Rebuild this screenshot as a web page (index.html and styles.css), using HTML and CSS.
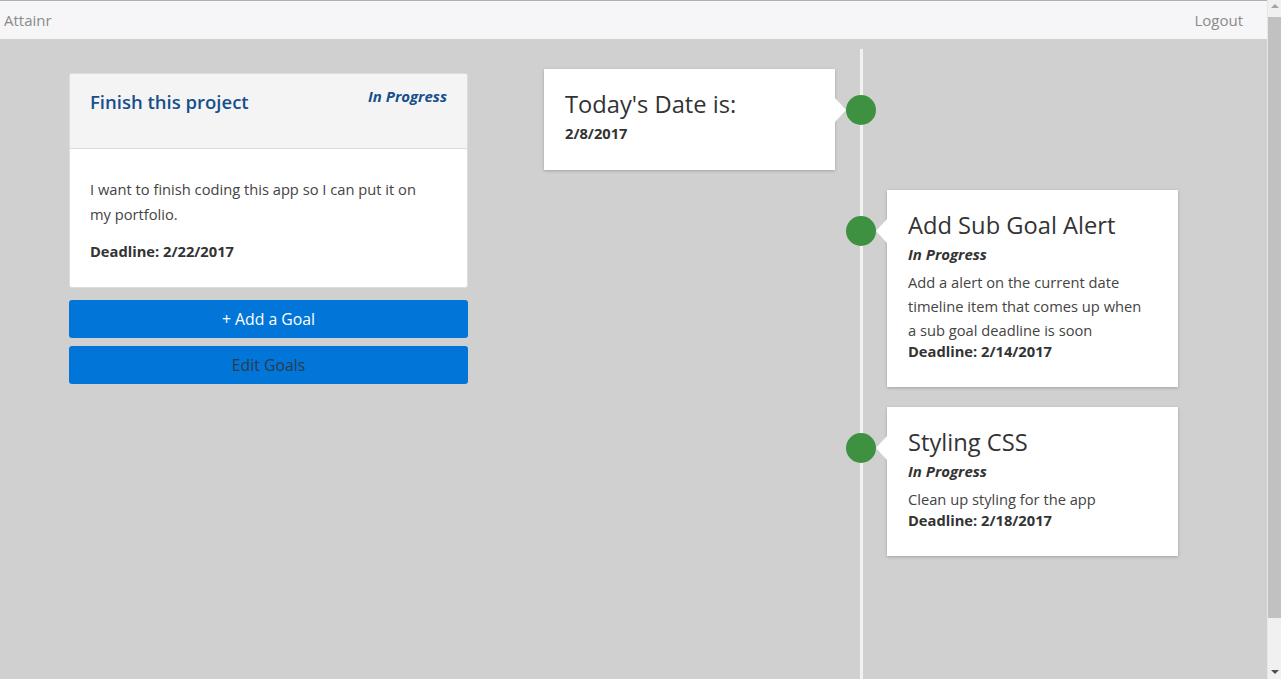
FILE: index.html
```html
<!DOCTYPE html>
<html>
<head>
<meta charset="utf-8">
<title>Attainr</title>
<link rel="stylesheet" href="styles.css">
</head>
<body>
<div class="window">
  <div class="page">
    <nav class="navbar">
      <a class="brand">Attainr</a>
      <a class="logout">Logout</a>
    </nav>
    <main class="main">
      <section class="goals">
        <div class="goal-card">
          <div class="goal-head">
            <h2 class="goal-title">Finish this project</h2>
            <span class="goal-status">In Progress</span>
          </div>
          <div class="goal-body">
            <p class="goal-desc">I want to finish coding this app so I can put it on my portfolio.</p>
            <p class="goal-deadline">Deadline: 2/22/2017</p>
          </div>
        </div>
        <button class="btn btn-add">+ Add a Goal</button>
        <button class="btn btn-edit">Edit Goals</button>
      </section>
      <section class="timeline">
        <div class="tl-item tl-left">
          <div class="tl-card">
            <h3 class="tl-title">Today's Date is:</h3>
            <p class="tl-date">2/8/2017</p>
          </div>
          <span class="dot"></span>
        </div>
        <div class="tl-item tl-right">
          <div class="tl-card">
            <h3 class="tl-title">Add Sub Goal Alert</h3>
            <p class="tl-status">In Progress</p>
            <p class="tl-desc">Add a alert on the current date timeline item that comes up when a sub goal deadline is soon</p>
            <p class="tl-deadline">Deadline: 2/14/2017</p>
          </div>
          <span class="dot"></span>
        </div>
        <div class="tl-item tl-right">
          <div class="tl-card">
            <h3 class="tl-title">Styling CSS</h3>
            <p class="tl-status">In Progress</p>
            <p class="tl-desc">Clean up styling for the app</p>
            <p class="tl-deadline">Deadline: 2/18/2017</p>
          </div>
          <span class="dot"></span>
        </div>
      </section>
    </main>
  </div>
  <div class="scrollbar">
    <span class="sb-up"></span>
    <span class="sb-thumb"></span>
    <span class="sb-track"></span>
    <span class="sb-down"></span>
  </div>
</div>
</body>
</html>
```
FILE: styles.css
```css
* { box-sizing: border-box; }
html, body { margin: 0; padding: 0; height: 100%; overflow: hidden; }
body {
  font-family: "Open Sans", "Noto Sans", sans-serif;
  font-size: 14.7px;
  color: #3a3a3a;
  background: #d0d0d0;
}
.window { display: flex; height: 679px; }
.page { flex: 1; display: flex; flex-direction: column; min-width: 0; }

.navbar {
  flex: none;
  height: 39px;
  border-top: 1px solid #b0b0b0;
  background: #f6f6f8;
  display: flex;
  align-items: center;
  justify-content: space-between;
  padding: 0 24px 0 4px;
  font-size: 15px;
  color: #8a8a8a;
}

.main { flex: 1; display: flex; align-items: flex-start; }

.goals {
  flex: none;
  width: 399px;
  margin: 34px 0 0 69px;
  display: flex;
  flex-direction: column;
  gap: 8px;
}
.goal-card {
  background: #fff;
  border: 1px solid #dcdcdc;
  border-radius: 3px;
  overflow: hidden;
  margin-bottom: 4px;
}
.goal-head {
  background: #f4f4f4;
  border-bottom: 1px solid #dcdcdc;
  height: 75px;
  display: flex;
  justify-content: space-between;
  align-items: flex-start;
  padding: 14px 20px 0 20px;
}
.goal-title {
  margin: 0;
  font-size: 18.5px;
  font-weight: 600;
  color: #174f8d;
  line-height: 28px;
}
.goal-status {
  font-style: italic;
  font-weight: 700;
  font-size: 15px;
  color: #174f8d;
  line-height: 18px;
  margin-top: -1px;
}
.goal-body { padding: 28px 32px 26px 20px; }
.goal-desc { margin: 0 0 14px; line-height: 25px; color: #444; }
.goal-deadline { margin: 0; font-weight: 700; line-height: 20px; color: #333; }

.btn {
  height: 38px;
  border: none;
  border-radius: 3px;
  background: #0275d8;
  font-family: inherit;
  font-size: 15.8px;
  padding: 0;
}
.btn-add { color: #fff; }
.btn-edit { color: #2c3b4b; }

.timeline {
  flex: none;
  position: relative;
  margin: 10px 0 0 76px;
  width: 634px;
  padding-top: 20px;
  display: flex;
  flex-direction: column;
  gap: 20px;
  align-self: stretch;
}
.timeline::before {
  content: "";
  position: absolute;
  left: 316px;
  top: 0;
  bottom: 0;
  width: 3px;
  background: #f2f2f2;
}
.tl-item { position: relative; width: 317px; }
.tl-left { padding-right: 26px; }
.tl-right { padding-left: 26px; margin-left: 317px; }
.tl-card {
  position: relative;
  background: #fff;
  box-shadow: 0 1px 3px rgba(0,0,0,0.22);
  padding: 19px 29px 20px 21px;
}
.tl-left .tl-card::after,
.tl-right .tl-card::after {
  content: "";
  position: absolute;
  top: 29px;
  border: 12px solid transparent;
}
.tl-left .tl-card::after { right: -23px; border-left: 11px solid #fff; }
.tl-right .tl-card::after { left: -23px; border-right: 11px solid #fff; }
.dot {
  position: absolute;
  top: 26px;
  width: 30px;
  height: 30px;
  border-radius: 50%;
  background: #3d9140;
  z-index: 2;
}
.tl-left .dot { right: -15px; }
.tl-right .dot { left: -15px; }

.tl-title {
  margin: 0;
  font-size: 23.7px;
  font-weight: 500;
  color: #333;
  line-height: 32px;
}
.tl-date { margin: 0 0 4px; font-weight: 700; font-size: 14.7px; line-height: 26px; color: #333; }
.tl-status { margin: 0; font-style: italic; font-weight: 700; font-size: 15px; line-height: 27px; color: #333; }
.tl-desc { margin: 0; line-height: 24px; color: #444; padding-top: 2px; }
.tl-deadline { margin: 0 0 7px; font-weight: 700; line-height: 18px; color: #333; }

.scrollbar {
  flex: none;
  width: 14px;
  background: #f0f0f0;
  display: flex;
  flex-direction: column;
  align-items: center;
  border-left: 1px solid #e6e6e6;
}
.sb-up, .sb-down { height: 17px; width: 100%; position: relative; flex: none; }
.sb-up::after, .sb-down::after {
  content: "";
  position: absolute;
  left: 3px;
  border: 4px solid transparent;
}
.sb-up::after { top: 4px; border-bottom: 4px solid #a3a3a3; border-top: 0; }
.sb-down::after { bottom: 5px; border-top: 4px solid #505050; border-bottom: 0; }
.sb-thumb { width: 100%; height: 601px; background: #c1c1c1; flex: none; }
.sb-track { flex: 1; }
```
